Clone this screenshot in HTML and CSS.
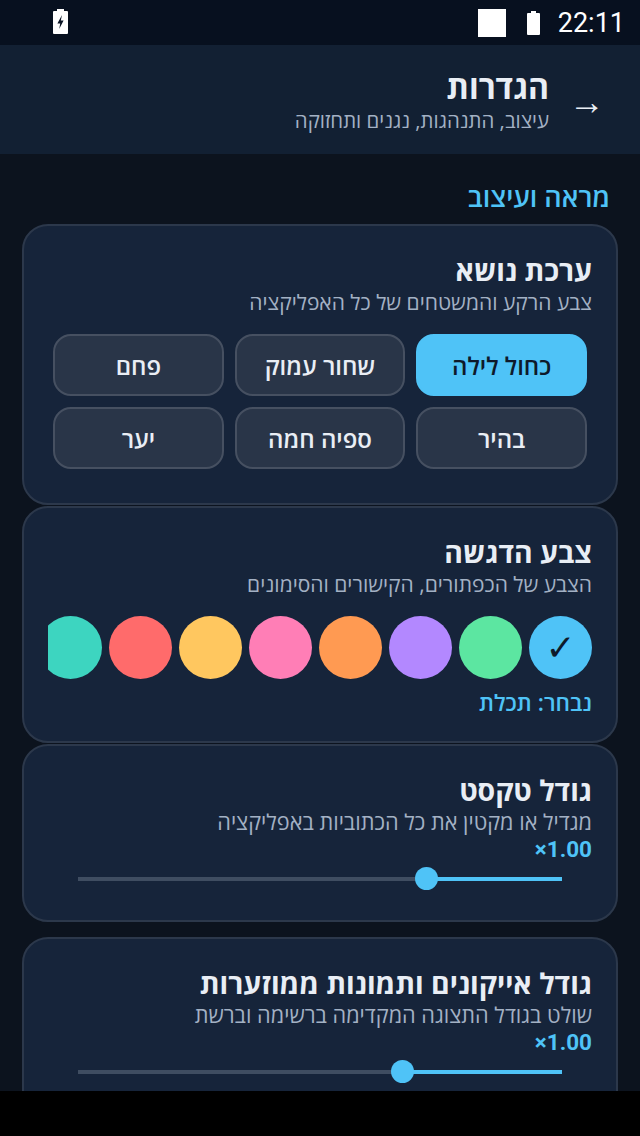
FILE: index.html
```html
<!DOCTYPE html>
<html lang="he" dir="rtl">
<head>
    <meta charset="UTF-8">
    <meta name="viewport" content="width=device-width, initial-scale=1.0">
    <title>הגדרות</title>
    <link rel="stylesheet" href="styles.css">
</head>
<body>
    <div class="screen">
        <div class="status-bar" dir="ltr">
            <svg class="charge-icon" viewBox="0 0 15 25" width="15" height="25">
                <path fill="#fff" d="M4 0h7v2h3a1 1 0 0 1 1 1v21a1 1 0 0 1-1 1H1a1 1 0 0 1-1-1V3a1 1 0 0 1 1-1h3z"/>
                <path fill="#0a1424" d="M9 6 4.4 14.4h2.8l-1 5.6 4.4-8.6H7.8z"/>
            </svg>
            <span class="status-gap"></span>
            <div class="white-box"></div>
            <svg class="battery-icon" viewBox="0 0 13 24" width="13" height="24">
                <path fill="#fff" d="M4 0h5v2h3a1 1 0 0 1 1 1v20a1 1 0 0 1-1 1H1a1 1 0 0 1-1-1V3a1 1 0 0 1 1-1h3z"/>
            </svg>
            <span class="clock">22:11</span>
        </div>

        <header class="top-bar">
            <span class="back-arrow">→</span>
            <div>
                <h1>הגדרות</h1>
                <p>עיצוב, התנהגות, נגנים ותחזוקה</p>
            </div>
        </header>

        <main class="content">
            <h2 class="section-title">מראה ועיצוב</h2>

            <section class="card card-theme">
                <h3>ערכת נושא</h3>
                <p class="hint">צבע הרקע והמשטחים של כל האפליקציה</p>
                <div class="theme-grid">
                    <button class="theme-btn active">כחול לילה</button>
                    <button class="theme-btn">שחור עמוק</button>
                    <button class="theme-btn">פחם</button>
                    <button class="theme-btn">בהיר</button>
                    <button class="theme-btn">ספיה חמה</button>
                    <button class="theme-btn">יער</button>
                </div>
            </section>

            <section class="card card-accent">
                <h3>צבע הדגשה</h3>
                <p class="hint">הצבע של הכפתורים, הקישורים והסימונים</p>
                <div class="swatches">
                    <div class="swatch sky">✓</div>
                    <div class="swatch green"></div>
                    <div class="swatch purple"></div>
                    <div class="swatch orange"></div>
                    <div class="swatch pink"></div>
                    <div class="swatch yellow"></div>
                    <div class="swatch red"></div>
                    <div class="swatch teal"></div>
                </div>
                <p class="picked">נבחר: תכלת</p>
            </section>

            <section class="card card-slider">
                <h3>גודל טקסט</h3>
                <p class="hint">מגדיל או מקטין את כל הכתוביות באפליקציה</p>
                <div class="value" dir="ltr">×1.00</div>
                <div class="slider">
                    <div class="slider-fill" style="width: 136px"></div>
                    <div class="slider-thumb"></div>
                    <div class="slider-rest"></div>
                </div>
            </section>

            <section class="card card-slider last">
                <h3>גודל אייקונים ותמונות ממוזערות</h3>
                <p class="hint">שולט בגודל התצוגה המקדימה ברשימה וברשת</p>
                <div class="value" dir="ltr">×1.00</div>
                <div class="slider">
                    <div class="slider-fill" style="width: 160px"></div>
                    <div class="slider-thumb"></div>
                    <div class="slider-rest"></div>
                </div>
            </section>
        </main>
    </div>
</body>
</html>
```

FILE: styles.css
```css
* {
    box-sizing: border-box;
}

body {
    font-family: 'Open Sans', Roboto, 'Liberation Sans', sans-serif;
    background-color: #000;
    margin: 0;
    padding: 0;
    height: 1136px;
    overflow: hidden;
}

h1, h2, h3, p {
    margin: 0;
}

.screen {
    height: 1091px;
    overflow: hidden;
    background-color: #0c131e;
}

.status-bar {
    height: 45px;
    background-color: #07101f;
    display: flex;
    align-items: center;
    padding: 0 15px 0 53px;
    color: #fff;
    font-family: Roboto, sans-serif;
}

.charge-icon {
    margin-top: -2px;
}

.status-gap {
    flex: 1;
}

.white-box {
    width: 28px;
    height: 28px;
    background-color: #fff;
}

.battery-icon {
    margin-left: 21px;
}

.clock {
    margin-left: 18px;
    font-size: 27px;
    line-height: 30px;
}

.top-bar {
    height: 109px;
    background-color: #122033;
    display: flex;
    align-items: center;
    padding: 3px 91px 0 0;
    position: relative;
}

.top-bar h1 {
    color: #e9eef5;
    font-size: 32px;
    line-height: 38px;
    font-weight: 700;
}

.top-bar p {
    color: #a3b1c4;
    font-size: 20.4px;
    line-height: 28px;
}

.back-arrow {
    position: absolute;
    left: 569px;
    top: 39px;
    color: #e9eef5;
    font-size: 36px;
    line-height: 36px;
    font-family: Roboto, sans-serif;
    font-weight: 700;
}

.content {
    padding: 27px 22px 0 22px;
}

.section-title {
    color: #4fc3f7;
    font-size: 27px;
    line-height: 32px;
    font-weight: 600;
    padding-right: 8px;
    margin-bottom: 11px;
}

.card {
    background-color: #16243a;
    border: 2px solid #2c384b;
    border-radius: 26px;
    padding: 27px 24px 0 24px;
    margin-bottom: 1px;
}

.card h3 {
    color: #e9eef5;
    font-size: 28.4px;
    line-height: 35px;
    font-weight: 700;
}

.hint {
    color: #a3b1c4;
    font-size: 21px;
    line-height: 28px;
}

.card-slider .hint {
    font-size: 21.7px;
}

.card-theme {
    height: 281px;
}

.theme-grid {
    display: grid;
    grid-template-columns: repeat(3, 1fr);
    gap: 11px 11px;
    margin: 18px 5px 0 5px;
}

.theme-btn {
    height: 62px;
    border: 2px solid #465061;
    border-radius: 18px;
    background-color: #293548;
    color: #e9eef5;
    font-family: inherit;
    font-size: 24px;
    font-weight: 600;
    padding: 0;
}

.theme-btn.active {
    background-color: #4fc3f7;
    border-color: #4fc3f7;
    color: #0e1a2b;
}

.card-accent {
    height: 237px;
}

.swatches {
    display: flex;
    gap: 7px;
    margin-top: 18px;
    overflow: hidden;
}

.swatch {
    flex: none;
    width: 63px;
    height: 63px;
    border-radius: 50%;
    display: flex;
    align-items: center;
    justify-content: center;
    color: #0e1a2b;
    font-size: 36px;
    font-weight: 700;
    font-family: 'DejaVu Sans', sans-serif;
}

.sky { background-color: #4fc3f7; }
.green { background-color: #5ce6a1; }
.purple { background-color: #b388ff; }
.orange { background-color: #ff9a52; }
.pink { background-color: #ff7eb6; }
.yellow { background-color: #ffc75f; }
.red { background-color: #ff6b6b; }
.teal { background-color: #3dd5c0; }

.picked {
    color: #4fc3f7;
    font-size: 22.5px;
    line-height: 28px;
    font-weight: 600;
    margin-top: 10px;
}

.card-slider {
    height: 178px;
    margin-bottom: 15px;
}

.card-slider.last {
    height: 300px;
}

.value {
    color: #4fc3f7;
    font-family: Roboto, sans-serif;
    font-size: 22.5px;
    line-height: 26px;
    font-weight: 700;
    text-align: right;
}

.slider {
    display: flex;
    align-items: center;
    height: 23px;
    margin: 5px 30px 0 30px;
}

.slider-fill {
    height: 4px;
    background-color: #4fc3f7;
}

.slider-thumb {
    flex: none;
    width: 23px;
    height: 23px;
    margin: 0 -11.5px;
    border-radius: 50%;
    background-color: #4fc3f7;
    position: relative;
}

.slider-rest {
    flex: 1;
    height: 4px;
    background-color: #3f4d61;
}
```
